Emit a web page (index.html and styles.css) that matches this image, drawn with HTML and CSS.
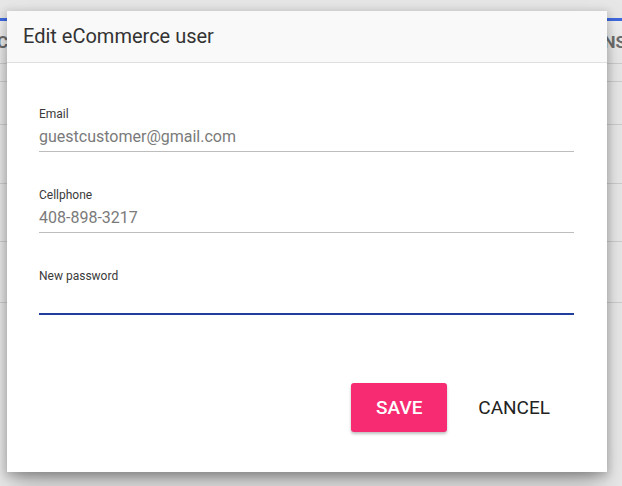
FILE: index.html
```html
<!DOCTYPE html>
<html>
<head>
<meta charset="utf-8">
<link rel="stylesheet" href="styles.css">
</head>
<body>
<div class="page">
  <div class="topbar"></div>
  <div class="sheet">
    <div class="thead">
      <span class="th th-left">CI</span>
      <span class="th th-right">NS</span>
    </div>
    <div class="row r1"></div>
    <div class="row r2"></div>
    <div class="row r3"></div>
    <div class="row r4"></div>
    <div class="row r5"></div>
  </div>
</div>

<div class="dialog">
  <div class="dialog-header">Edit eCommerce user</div>
  <div class="dialog-body">
    <div class="field">
      <div class="label">Email</div>
      <div class="value">guestcustomer@gmail.com</div>
    </div>
    <div class="field">
      <div class="label">Cellphone</div>
      <div class="value">408-898-3217</div>
    </div>
    <div class="field focused">
      <div class="label">New password</div>
      <div class="value"></div>
    </div>
    <div class="actions">
      <button class="btn btn-save">SAVE</button>
      <button class="btn btn-cancel">CANCEL</button>
    </div>
  </div>
</div>
</body>
</html>
```
FILE: styles.css
```css
html, body {
  margin: 0;
  padding: 0;
}
body {
  width: 622px;
  height: 486px;
  overflow: hidden;
  background: #e7e7e7;
  font-family: Roboto, "Liberation Sans", sans-serif;
  position: relative;
}
.page {
  display: flex;
  flex-direction: column;
}
.topbar {
  height: 18px;
  background: #e7e7e7;
}
.sheet {
  background: #efefef;
  border-top: 3px solid #3f69df;
  height: 465px;
}
.thead {
  height: 42px;
  display: flex;
  justify-content: space-between;
  align-items: center;
  border-bottom: 1px solid #d3d3d3;
  overflow: hidden;
}
.th {
  font-size: 17px;
  font-weight: 700;
  color: #6f6f6f;
}
.th-left { margin-left: -3px; }
.th-right { margin-right: -4px; }
.row {
  border-bottom: 1px solid #d3d3d3;
}
.r1 { height: 17px; }
.r2 { height: 42px; }
.r3 { height: 58px; }
.r4 { height: 57px; }
.r5 { height: 60px; }

.dialog {
  position: absolute;
  left: 7px;
  top: 11px;
  width: 600px;
  height: 461px;
  background: #fff;
  box-shadow: 0 11px 15px -7px rgba(0,0,0,.25), 0 24px 38px 3px rgba(0,0,0,.16), 0 2px 8px 2px rgba(0,0,0,.16);
  display: flex;
  flex-direction: column;
}
.dialog-header {
  background: #f9f9f9;
  border-bottom: 1px solid #e0e0e0;
  padding: 13px 16px 14px;
  font-size: 20px;
  line-height: 24px;
  color: #333;
}
.dialog-body {
  padding: 44px 33px 40px 32px;
  display: flex;
  flex-direction: column;
}
.field {
  display: flex;
  flex-direction: column;
  margin-bottom: 36px;
}
.label {
  font-size: 12px;
  line-height: 14px;
  color: #3a3a3a;
}
.value {
  margin-top: 6px;
  font-size: 16px;
  line-height: 20px;
  height: 20px;
  color: #7a7a7a;
  padding-bottom: 4px;
  border-bottom: 1px solid #bdbdbd;
}
.focused .value {
  border-bottom: 2px solid #203f9c;
}
.focused {
  margin-bottom: 68px;
}
.actions {
  display: flex;
  justify-content: flex-end;
  align-items: center;
  gap: 5px;
}
.btn {
  font-family: Roboto, "Liberation Sans", sans-serif;
  font-size: 19px;
  height: 49px;
  border: none;
  border-radius: 3px;
  padding: 0 24px;
  cursor: pointer;
}
.btn-save {
  background: #f62b72;
  color: #fff;
  font-weight: 500;
  width: 96px;
  padding: 0;
  box-shadow: 0 2px 3px rgba(0,0,0,.25);
}
.btn-cancel {
  background: transparent;
  color: #222;
  padding: 0 24px 0 26px;
}
```
